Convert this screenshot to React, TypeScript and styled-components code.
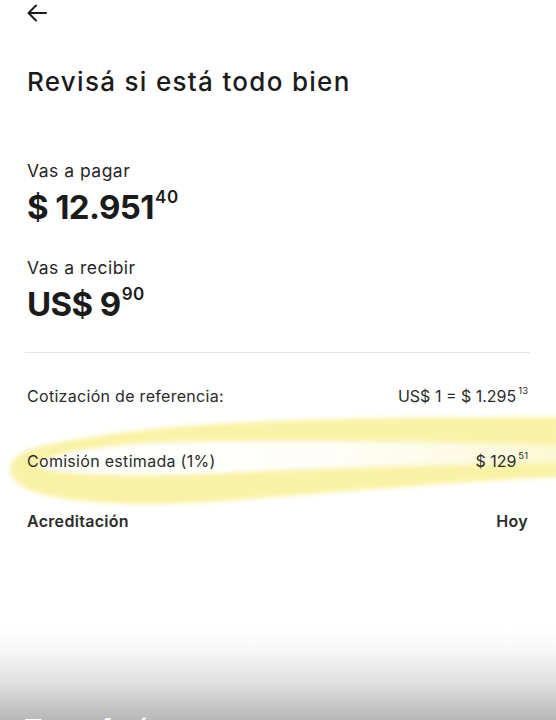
import styled, { createGlobalStyle } from "styled-components";

const Global = createGlobalStyle`
  html, body { margin: 0; padding: 0; background: #ffffff; }
  body { font-family: "Inter", "Noto Sans", sans-serif; color: #1b1b1b; }
`;

/* ================= PAGE ================= */
const Page = styled.div`
  position: relative;
  width: 556px;
  height: 720px;
  overflow: hidden;
  background: #ffffff;
  display: flex;
  flex-direction: column;
`;

const TopBar = styled.div`
  position: relative;
  z-index: 1;
  height: 26px;
  padding-left: 26px;
  display: flex;
  align-items: center;
`;

const Content = styled.div`
  position: relative;
  z-index: 1;
  padding: 0 27px;
  display: flex;
  flex-direction: column;
`;

const Title = styled.h1`
  margin: 40px 0 0 0;
  font-size: 26px;
  font-weight: 500;
  line-height: 32px;
  letter-spacing: 1.3px;
`;

/* ================= AMOUNTS ================= */
const AmountBlock = styled.div<{ $top: number }>`
  margin-top: ${(p) => p.$top}px;
  display: flex;
  flex-direction: column;
`;

const Label = styled.div`
  font-size: 17.5px;
  line-height: 22px;
  letter-spacing: 0.5px;
  color: #262626;
`;

const Amount = styled.div`
  margin-top: 6px;
  font-size: 33px;
  font-weight: 700;
  line-height: 38px;
  letter-spacing: -0.6px;
  display: flex;
  align-items: flex-start;
`;

const Cents = styled.span`
  font-size: 17px;
  font-weight: 600;
  line-height: 16px;
  margin-left: 1px;
  margin-top: 1px;
  letter-spacing: 0.6px;
`;

const Divider = styled.hr`
  margin: 29px 0 0 -2px;
  border: none;
  border-top: 1px solid #e6e6e6;
  width: 505px;
`;

/* ================= DETAIL ROWS ================= */
const Row = styled.div<{ $mt: number }>`
  margin-top: ${(p) => p.$mt}px;
  display: flex;
  justify-content: space-between;
  align-items: center;
  height: 22px;
  font-size: 16px;
  letter-spacing: 0.3px;
`;

const RowLabel = styled.span<{ $strong?: boolean }>`
  color: #2b2b2b;
  font-weight: ${(p) => (p.$strong ? 600 : 400)};
`;

const RowValue = styled.span<{ $strong?: boolean }>`
  display: flex;
  align-items: flex-start;
  color: #2b2b2b;
  font-weight: ${(p) => (p.$strong ? 600 : 400)};
  letter-spacing: ${(p) => (p.$strong ? 0.3 : 0)}px;
  margin-right: 1px;
`;

const SmallCents = styled.span`
  font-size: 9.5px;
  line-height: 9px;
  margin-left: 2px;
  letter-spacing: 0;
`;

/* marker scribble drawn over the screenshot */
const Highlight = styled.svg`
  position: absolute;
  left: 0;
  top: 390px;
  width: 556px;
  height: 130px;
  z-index: 0;
  pointer-events: none;
`;

/* ================= FOOTER ================= */
const Footer = styled.div`
  margin-top: auto;
  height: 92px;
  background: linear-gradient(to bottom, #ffffff 0%, #f7f7f7 25%, #dfdfdf 60%, #b8b8b8 100%);
  position: relative;
`;

const FooterText = styled.div`
  position: absolute;
  left: 24px;
  top: 88px;
  color: #ffffff;
  font-size: 28px;
  line-height: 28px;
  font-weight: 600;
  white-space: nowrap;
`;

const BackArrow = () => (
  <svg width="22" height="20" viewBox="0 0 22 20" fill="none">
    <path
      d="M20 10H3M10 2.5L2.5 10L10 17.5"
      stroke="#1b1b1b"
      strokeWidth="2"
      strokeLinecap="round"
      strokeLinejoin="round"
    />
  </svg>
);

const Scribble = () => (
  <Highlight viewBox="0 0 556 130">
    <defs>
      <filter id="soft" x="-10%" y="-50%" width="120%" height="200%">
        <feGaussianBlur stdDeviation="2.5" />
      </filter>
      <linearGradient id="hole" x1="0" y1="0" x2="1" y2="0">
        <stop offset="0" stopColor="#ffffff" stopOpacity="1" />
        <stop offset="0.55" stopColor="#ffffff" stopOpacity="0.95" />
        <stop offset="1" stopColor="#ffffff" stopOpacity="0.5" />
      </linearGradient>
    </defs>
    <g filter="url(#soft)">
      <path
        d="M560 27 C440 27, 300 28, 200 35 C130 40, 60 50, 28 60 C8 68, 4 84, 20 95 C40 108, 80 112, 130 114 C200 115, 280 106, 350 101 C430 95, 500 89, 560 87 Z"
        fill="#f9f2a6"
      />
      <path
        d="M40 72 C60 62, 100 56, 160 53 C260 50, 400 51, 560 55 L560 73 C450 75, 330 77, 240 82 C170 86, 90 86, 50 80 C40 78, 36 75, 40 72 Z"
        fill="url(#hole)"
      />
    </g>
  </Highlight>
);

export default function App() {
  return (
    <Page>
      <Global />
      <Scribble />
      <TopBar>
        <BackArrow />
      </TopBar>
      <Content>
        <Title>Revisá si está todo bien</Title>

        <AmountBlock $top={62}>
          <Label>Vas a pagar</Label>
          <Amount>
            $ 12.951<Cents>40</Cents>
          </Amount>
        </AmountBlock>

        <AmountBlock $top={31}>
          <Label>Vas a recibir</Label>
          <Amount>
            US$ 9<Cents>90</Cents>
          </Amount>
        </AmountBlock>

        <Divider />

        <Row $mt={32}>
          <RowLabel>Cotización de referencia:</RowLabel>
          <RowValue>
            US$ 1 = $ 1.295<SmallCents>13</SmallCents>
          </RowValue>
        </Row>
        <Row $mt={43}>
          <RowLabel>Comisión estimada (1%)</RowLabel>
          <RowValue>
            $ 129<SmallCents>51</SmallCents>
          </RowValue>
        </Row>
        <Row $mt={38}>
          <RowLabel $strong>Acreditación</RowLabel>
          <RowValue $strong>Hoy</RowValue>
        </Row>
      </Content>
      <Footer>
        <FooterText>Transferí</FooterText>
      </Footer>
    </Page>
  );
}
